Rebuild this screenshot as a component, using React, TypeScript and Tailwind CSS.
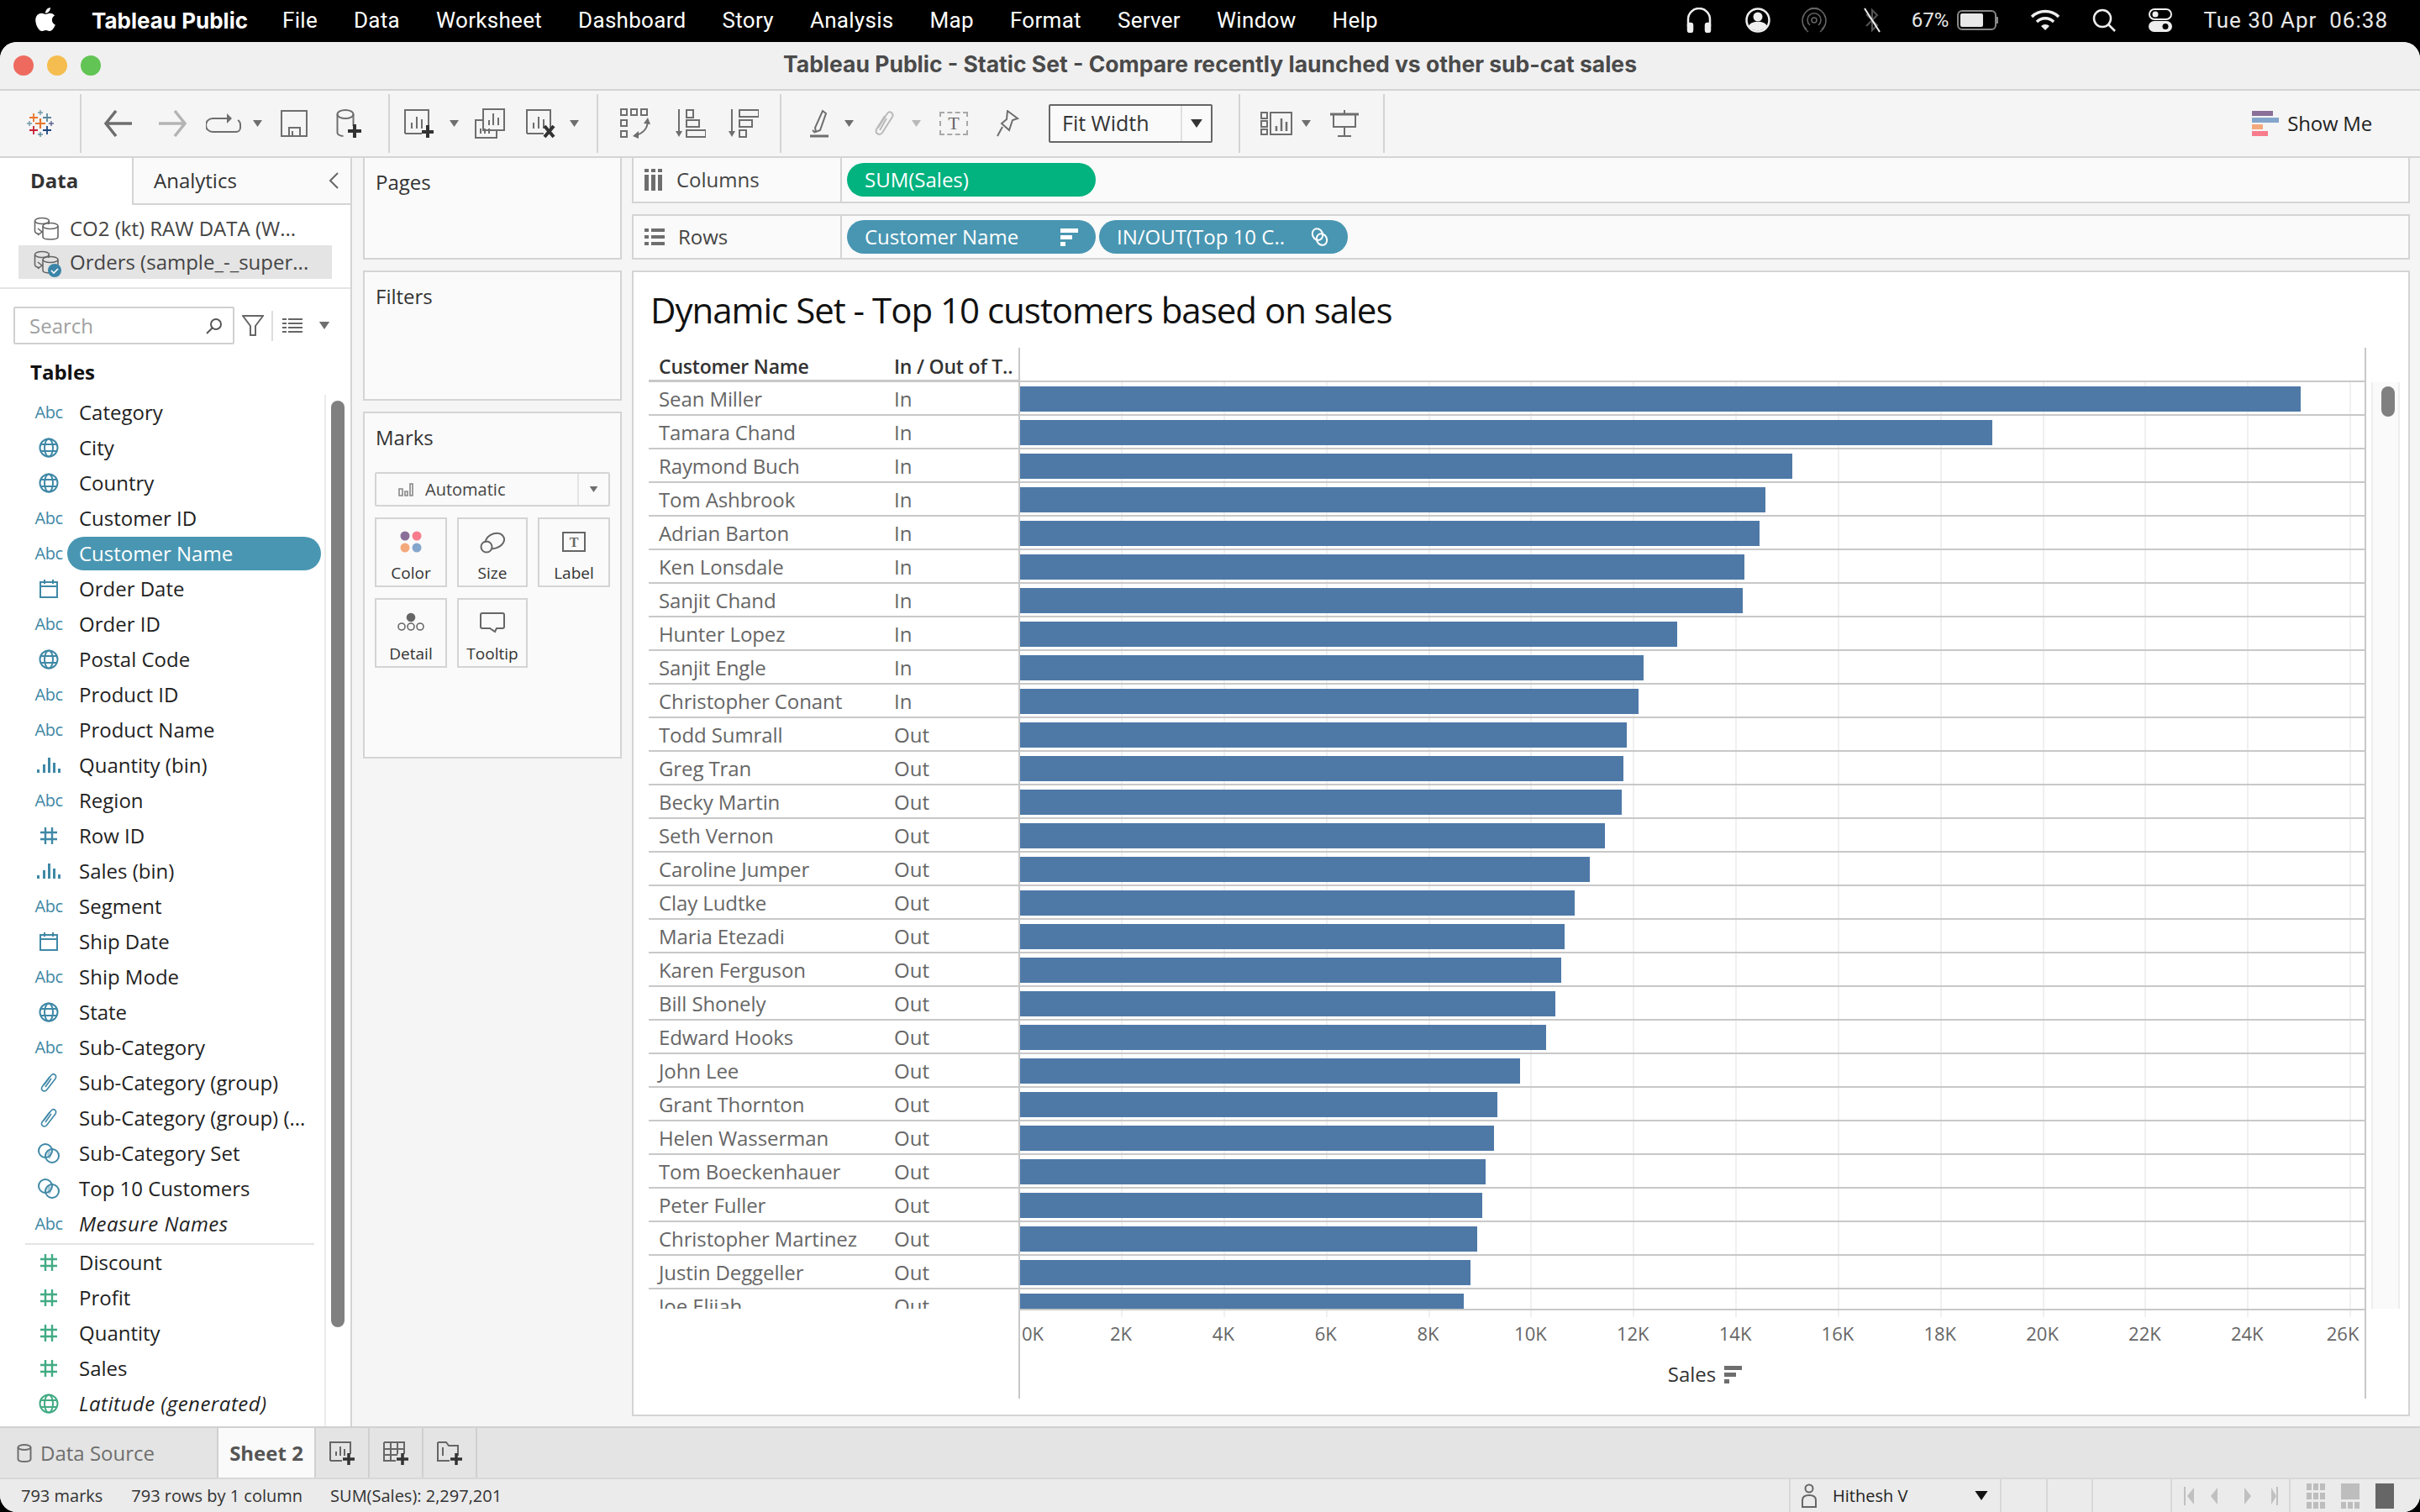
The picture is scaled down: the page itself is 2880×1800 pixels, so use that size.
import { FaApple } from "react-icons/fa";

const menuItems = ["File", "Data", "Worksheet", "Dashboard", "Story", "Analysis", "Map", "Format", "Server", "Window", "Help"];

type FieldKind = "abc" | "globe" | "date" | "bin" | "hash" | "clip" | "set";

const dimensions: { name: string; kind: FieldKind; italic?: boolean }[] = [
  { name: "Category", kind: "abc" },
  { name: "City", kind: "globe" },
  { name: "Country", kind: "globe" },
  { name: "Customer ID", kind: "abc" },
  { name: "Customer Name", kind: "abc" },
  { name: "Order Date", kind: "date" },
  { name: "Order ID", kind: "abc" },
  { name: "Postal Code", kind: "globe" },
  { name: "Product ID", kind: "abc" },
  { name: "Product Name", kind: "abc" },
  { name: "Quantity (bin)", kind: "bin" },
  { name: "Region", kind: "abc" },
  { name: "Row ID", kind: "hash" },
  { name: "Sales (bin)", kind: "bin" },
  { name: "Segment", kind: "abc" },
  { name: "Ship Date", kind: "date" },
  { name: "Ship Mode", kind: "abc" },
  { name: "State", kind: "globe" },
  { name: "Sub-Category", kind: "abc" },
  { name: "Sub-Category (group)", kind: "clip" },
  { name: "Sub-Category (group) (...", kind: "clip" },
  { name: "Sub-Category Set", kind: "set" },
  { name: "Top 10 Customers", kind: "set" },
  { name: "Measure Names", kind: "abc", italic: true },
];

const measures: { name: string; kind: FieldKind; italic?: boolean }[] = [
  { name: "Discount", kind: "hash" },
  { name: "Profit", kind: "hash" },
  { name: "Quantity", kind: "hash" },
  { name: "Sales", kind: "hash" },
  { name: "Latitude (generated)", kind: "globe", italic: true },
];

// name, in/out, pixel x where the bar ends
const customers: [string, string, number][] = [
  ["Sean Miller", "In", 2738],
  ["Tamara Chand", "In", 2371],
  ["Raymond Buch", "In", 2133],
  ["Tom Ashbrook", "In", 2101],
  ["Adrian Barton", "In", 2094],
  ["Ken Lonsdale", "In", 2076],
  ["Sanjit Chand", "In", 2074],
  ["Hunter Lopez", "In", 1996],
  ["Sanjit Engle", "In", 1956],
  ["Christopher Conant", "In", 1950],
  ["Todd Sumrall", "Out", 1936],
  ["Greg Tran", "Out", 1932],
  ["Becky Martin", "Out", 1930],
  ["Seth Vernon", "Out", 1910],
  ["Caroline Jumper", "Out", 1892],
  ["Clay Ludtke", "Out", 1874],
  ["Maria Etezadi", "Out", 1862],
  ["Karen Ferguson", "Out", 1858],
  ["Bill Shonely", "Out", 1851],
  ["Edward Hooks", "Out", 1840],
  ["John Lee", "Out", 1809],
  ["Grant Thornton", "Out", 1782],
  ["Helen Wasserman", "Out", 1778],
  ["Tom Boeckenhauer", "Out", 1768],
  ["Peter Fuller", "Out", 1764],
  ["Christopher Martinez", "Out", 1758],
  ["Justin Deggeller", "Out", 1750],
  ["Joe Elijah", "Out", 1742],
];

const ticks = [2, 4, 6, 8, 10, 12, 14, 16, 18, 20, 22, 24, 26];

function Caret({ className = "", color = "#6e6e6e" }: { className?: string; color?: string }) {
  return (
    <svg width="11" height="8" viewBox="0 0 11 8" className={className}>
      <path d="M0 0h11L5.5 8z" fill={color} />
    </svg>
  );
}

function Sep({ className = "" }: { className?: string }) {
  return <div className={`w-[2px] h-[70px] bg-[#d4d4d4] ${className}`} />;
}

function TableauLogo() {
  const plus = (x: number, y: number, r: number, w: number, c: string) => (
    <path key={`${x}-${y}`} d={`M${x - r} ${y}h${r * 2}M${x} ${y - r}v${r * 2}`} stroke={c} strokeWidth={w} fill="none" />
  );
  return (
    <svg width="32" height="32" viewBox="0 0 32 32" className="ml-[32px]">
      {plus(16, 16, 6, 2.2, "#e8762c")}
      {plus(8, 9, 5, 1.8, "#e8762c")}
      {plus(24, 9, 5, 1.8, "#5b879b")}
      {plus(8, 24, 5, 1.8, "#c72035")}
      {plus(24, 24, 5, 1.8, "#1f457e")}
      {plus(16, 3, 3, 1.4, "#7099a6")}
      {plus(3, 16, 3, 1.4, "#7099a6")}
      {plus(29, 16, 3, 1.4, "#5b6591")}
      {plus(16, 29, 3, 1.4, "#5b879b")}
    </svg>
  );
}

function SheetIcon({ className = "", x, plus }: { className?: string; x?: boolean; plus?: boolean }) {
  return (
    <svg width="36" height="36" viewBox="0 0 36 36" className={className} fill="none">
      <path d="M2 30V2h28v24M2 30h20" stroke="#6e6e6e" strokeWidth="2" />
      <path d="M10 24v-7M16 24V10M22 24v-11" stroke="#6e6e6e" strokeWidth="2" />
      {plus && <path d="M29 20v15M22 28h15" stroke="#333" strokeWidth="4" />}
      {x && <path d="M23 21l11 13M34 21L23 34" stroke="#333" strokeWidth="4" />}
    </svg>
  );
}

function Toolbar() {
  const s = "#6e6e6e";
  return (
    <div className="h-[80px] shrink-0 flex items-center bg-[#f5f5f5] border-b-2 border-[#d4d4d4]">
      <TableauLogo />
      <Sep className="ml-[31px]" />
      <svg width="36" height="32" viewBox="0 0 36 32" className="ml-[26px]" fill="none">
        <path d="M34 16H4M15 1L3 16l12 15" stroke={s} strokeWidth="3.5" />
      </svg>
      <svg width="36" height="32" viewBox="0 0 36 32" className="ml-[28px]" fill="none">
        <path d="M2 16h30M21 1l12 15-12 15" stroke="#b4b4b4" strokeWidth="3.5" />
      </svg>
      <svg width="42" height="26" viewBox="0 0 42 26" className="ml-[22px]" fill="none">
        <path d="M26 7H8a6 6 0 0 0 0 16h28a5 5 0 0 0 5-5v-4a6 6 0 0 0-3-5" stroke={s} strokeWidth="2" />
        <path d="M25 1l6 6-6 6z" fill={s} />
      </svg>
      <Caret className="ml-[14px]" />
      <svg width="32" height="32" viewBox="0 0 32 32" className="ml-[22px]" fill="none">
        <path d="M1 1h30v30H1zM10 31V21h13v10M14 31v-6" stroke={s} strokeWidth="2" />
      </svg>
      <svg width="30" height="34" viewBox="0 0 30 34" className="ml-[34px]" fill="none">
        <ellipse cx="11" cy="6" rx="9.5" ry="5" stroke={s} strokeWidth="2" />
        <path d="M1.5 6v22c0 2 3 4 7 4M20.5 6v14" stroke={s} strokeWidth="2" />
        <path d="M22 18v16M14 26h16" stroke="#333" strokeWidth="4" />
      </svg>
      <Sep className="ml-[32px]" />
      <SheetIcon plus className="ml-[16px]" />
      <Caret className="ml-[19px]" />
      <svg width="36" height="36" viewBox="0 0 36 36" className="ml-[19px]" fill="none">
        <path d="M10 1h25v25H10zM10 14H1v21h25v-9" stroke={s} strokeWidth="2" />
        <path d="M17 20v-6M22 20V6M28 20v-9M7 30v-6M12 30v-6M17 30v-6" stroke={s} strokeWidth="2" />
      </svg>
      <SheetIcon x className="ml-[24px]" />
      <Caret className="ml-[17px]" />
      <Sep className="ml-[21px]" />
      <svg width="36" height="36" viewBox="0 0 36 36" className="ml-[26px]" fill="none">
        <path d="M1 1h7v7H1zM13 1h7v7h-7zM25 1h7v7h-7zM1 14h7v7H1zM1 27h7v7H1z" stroke={s} strokeWidth="2" />
        <path d="M33 14c0 9-5 16-15 18" stroke={s} strokeWidth="2" />
        <path d="M28 18l5-7 3 8zM22 27l-7 6 7 3z" fill={s} />
      </svg>
      <svg width="36" height="36" viewBox="0 0 36 36" className="ml-[30px]" fill="none">
        <path d="M4 1v30" stroke={s} strokeWidth="2" />
        <path d="M0 27l4 7 4-7z" fill={s} />
        <path d="M13 2h8v9h-8zM13 14h15v8H13zM13 26h23v8H13z" stroke={s} strokeWidth="2" />
      </svg>
      <svg width="36" height="36" viewBox="0 0 36 36" className="ml-[27px]" fill="none">
        <path d="M4 1v30" stroke={s} strokeWidth="2" />
        <path d="M0 27l4 7 4-7z" fill={s} />
        <path d="M13 2h23v8H13zM13 14h15v8H13zM13 26h8v8h-8z" stroke={s} strokeWidth="2" />
      </svg>
      <Sep className="ml-[25px]" />
      <svg width="24" height="34" viewBox="0 0 24 34" className="ml-[33px]" fill="none">
        <path d="M16 2l4 3-7 20-5 2-1-5zM4 25l3 3" stroke={s} strokeWidth="2" />
        <path d="M1 32h22" stroke={s} strokeWidth="3" />
      </svg>
      <Caret className="ml-[18px]" />
      <svg width="26" height="32" viewBox="0 0 26 32" className="ml-[23px]" fill="none">
        <path d="M6 21L17 4c3-4 8 0 6 4L11 27c-3 4-9 1-7-4L14 7M16 10L8 24" stroke="#b9b9b9" strokeWidth="2" />
      </svg>
      <Caret className="ml-[20px]" color="#b9b9b9" />
      <div className="ml-[22px] w-[34px] h-[28px] border-2 border-dashed border-[#a8a8a8] flex items-center justify-center font-['Liberation_Serif',serif] text-[22px] leading-none text-[#666]">
        T
      </div>
      <svg width="28" height="32" viewBox="0 0 28 32" className="ml-[33px]" fill="none">
        <path d="M14 1l12 9-6 2-4 12-9-8 6-5zM8 20L2 31" stroke={s} strokeWidth="2" />
      </svg>
      <div className="ml-[35px] w-[195px] h-[46px] flex border-2 border-[#666] rounded-[2px] bg-[#fafafa] items-center">
        <span className="flex-1 pl-[14px] text-[25px] text-[#333]">Fit Width</span>
        <div className="w-[36px] h-full border-l-2 border-[#e0e0e0] flex items-center justify-center">
          <Caret color="#333" className="w-[14px] h-[10px]" />
        </div>
      </div>
      <Sep className="ml-[31px]" />
      <svg width="38" height="28" viewBox="0 0 38 28" className="ml-[24px]" fill="none">
        <path d="M1 1h7v7H1zM1 11h7v7H1zM1 21h7v6H1zM12 1h25v26H12z" stroke={s} strokeWidth="2" />
        <path d="M19 23v-6M25 23V8M31 23V12" stroke={s} strokeWidth="2.5" />
      </svg>
      <Caret className="ml-[11px]" />
      <svg width="34" height="32" viewBox="0 0 34 32" className="ml-[23px]" fill="none">
        <path d="M0 5h34" stroke={s} strokeWidth="3" />
        <path d="M4 5v15h26V5M17 0v5M17 20v10M9 31h16" stroke={s} strokeWidth="2" />
      </svg>
      <Sep className="ml-[29px]" />
      <div className="ml-auto mr-[57px] flex items-center">
        <div className="flex flex-col gap-[2px] w-[32px]">
          <div className="h-[6px] w-[25px] bg-[#8a7098]" />
          <div className="h-[6px] w-[32px] bg-[#85a6cc]" />
          <div className="h-[6px] w-[13px] bg-[#f4a97c]" />
          <div className="h-[6px] w-[19px] bg-[#f87c8c]" />
        </div>
        <span className="ml-[10px] text-[24px] text-[#222] tracking-[-0.2px]">Show Me</span>
      </div>
    </div>
  );
}

function FieldIcon({ kind, color }: { kind: FieldKind; color: string }) {
  if (kind === "abc") return <span className="text-[20px] leading-none tracking-[-0.5px]" style={{ color }}>Abc</span>;
  if (kind === "globe")
    return (
      <svg width="24" height="24" viewBox="0 0 24 24" fill="none" stroke={color} strokeWidth="2">
        <circle cx="12" cy="12" r="10.5" />
        <ellipse cx="12" cy="12" rx="5" ry="10.5" />
        <path d="M2 8h20M2 16h20" />
      </svg>
    );
  if (kind === "date")
    return (
      <svg width="24" height="24" viewBox="0 0 24 24" fill="none" stroke={color} strokeWidth="2">
        <path d="M2 4h20v18H2zM2 9h20M7 1v5M17 1v5" />
      </svg>
    );
  if (kind === "bin")
    return (
      <svg width="28" height="20" viewBox="0 0 28 20" fill={color}>
        <path d="M0 15h3v4H0zM7 9h3v10H7zM13 1h3v18h-3zM19 7h3v12h-3zM25 14h3v5h-3z" />
      </svg>
    );
  if (kind === "hash")
    return (
      <svg width="22" height="22" viewBox="0 0 22 22" fill="none" stroke={color} strokeWidth="2.4">
        <path d="M7 1v20M15 1v20M1 7h20M1 15h20" />
      </svg>
    );
  if (kind === "clip")
    return (
      <svg width="22" height="24" viewBox="0 0 22 24" fill="none" stroke={color} strokeWidth="1.6">
        <path d="M5 15L14 3c3-3 7 0 5 4L9 20c-3 4-8 1-6-3L12 5M14 7L7 17" />
      </svg>
    );
  return (
    <svg width="28" height="24" viewBox="0 0 28 24" fill="none">
      <path d="M15 8a8 8 0 0 1 0 11a8 8 0 0 1-1-11z" fill={color} opacity="0.45" />
      <circle cx="10" cy="9" r="8" stroke={color} strokeWidth="2" />
      <circle cx="18" cy="15" r="8" stroke={color} strokeWidth="2" />
    </svg>
  );
}

function FieldRow({ field, color, active }: { field: { name: string; kind: FieldKind; italic?: boolean }; color: string; active?: boolean }) {
  return (
    <div className="h-[42px] flex items-center pl-[36px] pr-[4px]">
      <div className="w-[44px] flex justify-center">
        <FieldIcon kind={field.kind} color={color} />
      </div>
      <div className={`flex-1 h-[40px] flex items-center pl-[14px] text-[24px] whitespace-nowrap ${active ? "bg-[#4996b2] text-white rounded-full" : "text-[#1f1f1f]"} ${field.italic ? "italic tracking-[0.5px]" : ""}`}>
        {field.name}
      </div>
    </div>
  );
}

function DataPane() {
  return (
    <div className="w-[419px] shrink-0 bg-white border-r-2 border-[#d4d4d4] flex flex-col">
      <div className="h-[56px] flex">
        <div className="w-[157px] pl-[36px] pb-[2px] flex items-center text-[24px] font-bold text-[#333]">Data</div>
        <div className="flex-1 border-l-2 border-b-2 border-[#d4d4d4] bg-[#fafafa] flex items-center pl-[24px] text-[24px] text-[#333]">
          Analytics
          <svg width="12" height="20" viewBox="0 0 12 20" className="ml-auto mr-[14px]" fill="none">
            <path d="M11 1L2 10l9 9" stroke="#666" strokeWidth="2" />
          </svg>
        </div>
      </div>
      <div className="h-[100px] pt-[8px] border-b-2 border-[#e4e4e4]">
        <div className="h-[40px] flex items-center pl-[40px] text-[24px] text-[#444] whitespace-nowrap">
          <DbIcon />
          <span className="ml-[13px]">CO2 (kt) RAW DATA (W...</span>
        </div>
        <div className="h-[40px] ml-[22px] mr-[22px] bg-[#e4e4e4] flex items-center pl-[18px] text-[24px] text-[#444] whitespace-nowrap">
          <div className="relative">
            <DbIcon />
            <svg width="16" height="16" viewBox="0 0 16 16" className="absolute right-[-3px] bottom-[-4px]">
              <circle cx="8" cy="8" r="8" fill="#3a85a8" />
              <path d="M4 8l3 3 5-5" stroke="#fff" strokeWidth="1.6" fill="none" />
            </svg>
          </div>
          <span className="ml-[13px]">Orders (sample_-_super...</span>
        </div>
      </div>
      <div className="flex items-center pl-[16px] pt-[21px]">
        <div className="w-[263px] h-[45px] border-2 border-[#d0d0d0] rounded-[2px] flex items-center pl-[17px] pr-[12px] text-[24px] text-[#a0a0a0]">
          Search
          <svg width="20" height="20" viewBox="0 0 20 20" className="ml-auto" fill="none" stroke="#555" strokeWidth="2">
            <circle cx="12" cy="8" r="6" />
            <path d="M8 12l-7 7" />
          </svg>
        </div>
        <svg width="26" height="26" viewBox="0 0 26 26" className="ml-[9px]" fill="none" stroke="#666" strokeWidth="2">
          <path d="M1 1h24L16 13v11h-6V13z" />
        </svg>
        <div className="ml-[9px] w-[2px] h-[36px] bg-[#ddd]" />
        <svg width="24" height="18" viewBox="0 0 24 18" className="ml-[11px]" fill="#666">
          <path d="M0 0h5v2H0zM7 0h17v2H7zM0 5h5v2H0zM7 5h17v2H7zM0 10h5v2H0zM7 10h17v2H7zM0 15h5v2H0zM7 15h17v2H7z" />
        </svg>
        <Caret className="ml-[19px] w-[14px] h-[9px]" />
      </div>
      <div className="h-[60px] shrink-0 pl-[36px] pt-[6px] flex items-center text-[24px] font-bold text-[#111]">Tables</div>
      <div className="flex-1 flex overflow-hidden">
        <div className="w-[388px] shrink-0 border-r-2 border-[#ececec] relative">
          <div className="h-[1008px]">
            {dimensions.map((f) => (
              <FieldRow key={f.name} field={f} color="#3f88a6" active={f.name === "Customer Name"} />
            ))}
          </div>
          <div className="h-[4px] flex items-end pl-[30px] pr-[12px]">
            <div className="h-[2px] w-full bg-[#e4e4e4]" />
          </div>
          {measures.map((f) => (
            <FieldRow key={f.name} field={f} color="#42ab83" />
          ))}
        </div>
        <div className="flex-1 pl-[6px]">
          <div className="w-[16px] h-[1103px] mt-[7px] bg-[#808080] rounded-full" />
        </div>
      </div>
    </div>
  );
}

function DbIcon() {
  return (
    <svg width="30" height="28" viewBox="0 0 30 28" fill="none" stroke="#666" strokeWidth="1.6">
      <ellipse cx="10" cy="5" rx="8.5" ry="3.5" />
      <path d="M1.5 5v12c0 2 2 3 5 3.5M18 9c0-1 0-2 0-4" />
      <ellipse cx="20" cy="11" rx="9" ry="3.5" />
      <path d="M11 11v13c0 2 4 3 9 3s9-1 9-3V11M5 14l5 4-5 4" />
    </svg>
  );
}

function MarkButton({ label, width, children }: { label: string; width: string; children: React.ReactNode }) {
  return (
    <div className={`${width} h-[83px] border-2 border-[#d4d4d4] flex flex-col items-center pt-[12px]`}>
      <div className="h-[30px] flex items-center">{children}</div>
      <span className="mt-[10px] text-[19px] leading-[24px] text-[#333]">{label}</span>
    </div>
  );
}

function CardsColumn() {
  return (
    <div className="w-[308px] shrink-0 ml-[13px] flex flex-col">
      <div className="h-[121px] border-2 border-t-0 border-[#d4d4d4] bg-[#fafafa] px-[13px] pt-[15px] text-[24px] leading-[28px] text-[#333]">Pages</div>
      <div className="h-[155px] mt-[13px] border-2 border-[#d4d4d4] bg-[#fafafa] px-[13px] pt-[15px] text-[24px] leading-[28px] text-[#333]">Filters</div>
      <div className="h-[413px] mt-[13px] border-2 border-[#d4d4d4] bg-[#fafafa] px-[12px] pt-[15px]">
        <div className="pl-[1px] text-[24px] leading-[28px] text-[#333]">Marks</div>
        <div className="mt-[27px] h-[41px] border-2 border-[#d4d4d4] rounded-[2px] flex items-center pl-[26px] text-[20px] text-[#444]">
          <svg width="18" height="16" viewBox="0 0 18 16" fill="none" stroke="#888" strokeWidth="1.6">
            <path d="M1 7h4v8H1zM8 10h3v5H8zM14 1h3v14h-3z" />
          </svg>
          <span className="ml-[14px] flex-1">Automatic</span>
          <div className="w-[37px] h-full border-l-2 border-[#e4e4e4] flex items-center justify-center">
            <Caret className="w-[13px] h-[7px]" />
          </div>
        </div>
        <div className="mt-[13px] flex gap-[12px]">
          <MarkButton label="Color" width="w-[86px]">
            <svg width="26" height="26" viewBox="0 0 26 26">
              <circle cx="6" cy="6" r="5.5" fill="#8a7098" />
              <circle cx="20" cy="6" r="5.5" fill="#f87c8c" />
              <circle cx="6" cy="20" r="5.5" fill="#f4a97c" />
              <circle cx="20" cy="20" r="5.5" fill="#85a6cc" />
            </svg>
          </MarkButton>
          <MarkButton label="Size" width="w-[84px]">
            <svg width="30" height="28" viewBox="0 0 30 28" fill="none" stroke="#666" strokeWidth="2">
              <path d="M7 15C6 5 26 -2 29 10c1 8-10 13-15 12" />
              <circle cx="8" cy="20" r="6.5" />
            </svg>
          </MarkButton>
          <MarkButton label="Label" width="w-[86px]">
            <svg width="28" height="24" viewBox="0 0 28 24" fill="none">
              <path d="M1 1h26v22H1z" stroke="#666" strokeWidth="2" />
              <text x="14" y="18" textAnchor="middle" fontFamily="Liberation Serif" fontWeight="bold" fontSize="16" fill="#666">T</text>
            </svg>
          </MarkButton>
        </div>
        <div className="mt-[13px] flex gap-[12px]">
          <MarkButton label="Detail" width="w-[86px]">
            <svg width="32" height="24" viewBox="0 0 32 24" fill="none" stroke="#666" strokeWidth="1.6">
              <circle cx="16" cy="6" r="4.5" fill="#666" />
              <circle cx="5" cy="17" r="4" />
              <circle cx="16" cy="17" r="4" />
              <circle cx="27" cy="17" r="4" />
            </svg>
          </MarkButton>
          <MarkButton label="Tooltip" width="w-[84px]">
            <svg width="30" height="26" viewBox="0 0 30 26" fill="none" stroke="#666" strokeWidth="2">
              <path d="M3 2h24a2 2 0 0 1 2 2v14a2 2 0 0 1-2 2h-7l-2 4-6-4H3a2 2 0 0 1-2-2V4a2 2 0 0 1 2-2z" />
            </svg>
          </MarkButton>
        </div>
      </div>
    </div>
  );
}

function SortIcon({ color = "#fff" }: { color?: string }) {
  return (
    <svg width="21" height="21" viewBox="0 0 21 21" fill={color}>
      <path d="M0 0h21v5H0zM0 8h14v5H0zM0 16h6v5H0z" />
    </svg>
  );
}

function Pill({ label, color, children }: { label: string; color: string; children?: React.ReactNode }) {
  return (
    <div className={`w-[296px] h-[40px] rounded-[20px] ${color} flex items-center pl-[21px] pr-[21px] text-[24px] text-white whitespace-nowrap`}>
      <span className="flex-1">{label}</span>
      {children}
    </div>
  );
}

function Shelf({ label, className, icon, children }: { label: string; className: string; icon: React.ReactNode; children: React.ReactNode }) {
  return (
    <div className={`h-[54px] flex bg-[#fafafa] border-2 border-[#d4d4d4] ${className}`}>
      <div className="w-[248px] border-r-2 border-[#d4d4d4] flex items-center pl-[13px] text-[24px] text-[#444]">
        {icon}
        <span className="ml-[16px]">{label}</span>
      </div>
      <div className="flex-1 flex items-center pl-[6px] gap-[4px]">{children}</div>
    </div>
  );
}

const axisX = (k: number) => 1212.2 + 60.92 * k - 1214;

function Chart() {
  return (
    <div className="flex-1 flex mt-[13px] mb-[12px] bg-white border-2 border-[#d4d4d4] min-h-0 flex-col">
      <div className="h-[90px] shrink-0 pl-[20px] pt-[20px] text-[42px] leading-[50px] tracking-[-1px] text-[#111] whitespace-nowrap">
        Dynamic Set - Top 10 customers based on sales
      </div>
      <div className="flex pl-[18px]">
        <div className="w-[2044px]">
          <div className="h-[41px] flex">
            <div className="w-[440px] flex items-center pt-[6px] border-b-[3px] border-[#c8c8c8] text-[23px] font-semibold text-[#333] whitespace-nowrap tracking-[-0.2px]">
              <span className="w-[292px] pl-[12px]">Customer Name</span>
              <span>In / Out of T..</span>
            </div>
            <div className="flex-1 border-x-2 border-b-2 border-[#c8c8c8]" />
          </div>
          <div className="relative h-[1103px] overflow-hidden">
            {customers.map(([name, inOut, end]) => (
              <div key={name} className="h-[40px] flex border-b-2 border-[#c8c8c8] text-[24px] text-[#666]">
                <span className="w-[292px] pl-[12px] leading-[40px] whitespace-nowrap tracking-[-0.1px]">{name}</span>
                <span className="w-[148px] leading-[40px]">{inOut}</span>
                <div className="flex-1 border-x-2 border-[#c8c8c8] pt-[5px] relative">
                  {ticks.map((k) => (
                    <div key={k} className="absolute top-0 bottom-0 w-[2px] bg-[#f0f0f0]" style={{ left: axisX(k) }} />
                  ))}
                  <div className="relative h-[30px] bg-[#4e79a7]" style={{ width: end - 1214 }} />
                </div>
              </div>
            ))}
          </div>
          <div className="h-[107px] ml-[440px] border-x-2 border-t-2 border-[#c8c8c8] flex flex-col">
            <div className="h-[56px] relative shrink-0 text-[22px] text-[#666]">
              {ticks.map((k) => (
                <div key={k} className="absolute top-0 h-[8px] w-[2px] bg-[#f0f0f0]" style={{ left: axisX(k) }} />
              ))}
              <span className="absolute left-[2px] top-[13px] leading-[28px]">0K</span>
              {ticks.map((k) => (
                <span key={k} className="absolute top-[13px] leading-[28px] -translate-x-1/2" style={{ left: k === 26 ? axisX(k) - 8 : axisX(k) }}>
                  {k}K
                </span>
              ))}
            </div>
            <div className="flex items-center justify-center pl-[30px] pt-[2px] text-[24px] font-medium text-[#333]">
              Sales
              <span className="ml-[10px] flex">
                <SortIcon color="#6e6e6e" />
              </span>
            </div>
          </div>
        </div>
        <div className="w-[34px] h-[1103px] ml-[6px] mt-[41px] bg-[#fafafa] border-x-2 border-[#eeeeee] pt-[5px] pl-[10px]">
          <div className="w-[16px] h-[36px] rounded-full bg-[#808080]" />
        </div>
      </div>
    </div>
  );
}

function MainColumn() {
  return (
    <div className="flex-1 ml-[12px] mr-[12px] flex flex-col min-w-0">
      <Shelf
        label="Columns"
        className="border-t-0"
        icon={
          <svg width="22" height="26" viewBox="0 0 22 26" fill="#6e6e6e">
            <path d="M0 7h5v19H0zM8 7h5v19H8zM16 7h5v19h-5zM0 0h5v4H0zM8 0h5v4H8zM16 0h5v4h-5z" />
          </svg>
        }
      >
        <Pill label="SUM(Sales)" color="bg-[#02b27f]" />
      </Shelf>
      <Shelf
        label="Rows"
        className="mt-[13px]"
        icon={
          <svg width="24" height="20" viewBox="0 0 24 20" fill="#6e6e6e">
            <path d="M0 0h5v4H0zM8 0h16v4H8zM0 8h5v4H0zM8 8h16v4H8zM0 16h5v4H0zM8 16h16v4H8z" />
          </svg>
        }
      >
        <Pill label="Customer Name" color="bg-[#4996b2]">
          <SortIcon />
        </Pill>
        <Pill label="IN/OUT(Top 10 C.." color="bg-[#4996b2]">
          <svg width="24" height="24" viewBox="0 0 24 24" fill="none" stroke="#fff" strokeWidth="2">
            <ellipse cx="9" cy="9" rx="6" ry="7" transform="rotate(-25 9 9)" />
            <ellipse cx="14" cy="15" rx="6" ry="7" transform="rotate(-25 14 15)" />
          </svg>
        </Pill>
      </Shelf>
      <Chart />
    </div>
  );
}

function TabBar() {
  const addIcons = [
    <path key="a" d="M2 24V2h24v14M2 24h14M9 18v-5M14 18V7M19 18v-8" />,
    <path key="b" d="M2 2h24v14M2 2v22h14M2 10h24M2 17h16M10 2v22M18 2v14" />,
    <path key="c" d="M2 2h10l3 4h11v12M2 2v22h14M8 8v10" />,
  ];
  return (
    <div className="h-[61px] shrink-0 bg-[#e4e4e4] border-t-2 border-[#d0d0d0] flex">
      <div className="w-[260px] flex items-center pl-[20px] text-[24px] text-[#6e6e6e] border-r-2 border-[#d0d0d0]">
        <svg width="18" height="22" viewBox="0 0 18 22" fill="none" stroke="#6e6e6e" strokeWidth="2">
          <ellipse cx="9" cy="4" rx="7.5" ry="3" />
          <path d="M1.5 4v14c0 2 3 3 7.500 3s7.500-1 7.500-3V4" />
        </svg>
        <span className="ml-[10px]">Data Source</span>
      </div>
      <div className="w-[116px] bg-[#fafafa] border-r-2 border-[#d0d0d0] flex items-center justify-center text-[24px] font-bold text-[#555]">Sheet 2</div>
      {addIcons.map((icon, i) => (
        <div key={i} className="w-[64px] flex items-center justify-center border-r-2 border-[#d0d0d0]">
          <svg width="32" height="30" viewBox="0 0 32 30" fill="none" stroke="#666" strokeWidth="2">
            {icon}
            <path d="M24 15v14M17 22h14" stroke="#333" strokeWidth="3.5" />
          </svg>
        </div>
      ))}
    </div>
  );
}

function StatusBar() {
  return (
    <div className="h-[41px] shrink-0 bg-[#ebebeb] border-t-2 border-[#d8d8d8] flex items-center text-[20px] text-[#333]">
      <span className="ml-[25px]">793 marks</span>
      <span className="ml-[34px]">793 rows by 1 column</span>
      <span className="ml-[33px]">SUM(Sales): 2,297,201</span>
      <div className="ml-auto h-full flex items-center">
        <div className="w-[253px] h-full border-l-2 border-r-2 border-[#d8d8d8] flex items-center pl-[12px]">
          <svg width="20" height="30" viewBox="0 0 20 30" fill="none" stroke="#666" strokeWidth="2">
            <circle cx="10" cy="6" r="4.5" />
            <path d="M2 28V20c0-4 3-6 8-6s8 2 8 6v8z" />
          </svg>
          <span className="ml-[18px] flex-1 text-[#222]">Hithesh V</span>
          <Caret color="#111" className="mr-[14px] w-[16px] h-[11px]" />
        </div>
        <div className="w-[55px] h-full border-r-2 border-[#d8d8d8]" />
        <div className="w-[54px] h-full border-r-2 border-[#d8d8d8]" />
        <div className="w-[94px] h-full border-r-2 border-[#d8d8d8]" />
        <div className="w-[141px] h-full border-r-2 border-[#d8d8d8] flex items-center justify-center">
          <svg width="112" height="26" viewBox="0 0 112 26" fill="#c0c0c0">
            <path d="M0 2h2v22H0zM12 3v20L4 13zM40 3v20l-8-10zM72 3v20l8-10zM104 3v20l6-10zM110 2h2v22h-2z" />
          </svg>
        </div>
        <div className="w-[154px] h-full flex items-center pl-[19px] gap-[19px]">
          <svg width="22" height="30" viewBox="0 0 22 30" fill="#bdbdbd">
            <path d="M0 0h6v8H0zM8 0h6v8H8zM16 0h6v8h-6zM0 11h6v8H0zM8 11h6v8H8zM16 11h6v8h-6zM0 22h6v8H0zM8 22h6v8H8zM16 22h6v8h-6z" />
          </svg>
          <svg width="22" height="30" viewBox="0 0 22 30" fill="#bdbdbd">
            <path d="M0 0h22v19H0zM0 22h6v8H0zM8 22h6v8H8zM16 22h6v8h-6z" />
          </svg>
          <div className="w-[22px] h-[30px] bg-[#666]" />
        </div>
      </div>
    </div>
  );
}

function MenuBar() {
  return (
    <div className="h-[50px] shrink-0 flex items-center bg-black text-white font-['Roboto',sans-serif] text-[26px] pb-[2px]">
      <FaApple className="ml-[38px] w-[32px] h-[32px] mb-[3px]" />
      <span className="ml-[39px] font-['Inter',sans-serif] text-[26px] font-bold">Tableau Public</span>
      <div className="ml-[41px] flex gap-[43px] tracking-[0.3px]">
        {menuItems.map((m) => (
          <span key={m}>{m}</span>
        ))}
      </div>
      <div className="ml-auto flex items-center text-[#e8e8e8]">
        <svg width="30" height="30" viewBox="0 0 30 30" fill="none" stroke="#eee" strokeWidth="2.5">
          <path d="M2 22V14a13 13 0 0 1 26 0v8" />
          <rect x="2" y="19" width="5" height="10" rx="2" fill="#eee" />
          <rect x="23" y="19" width="5" height="10" rx="2" fill="#eee" />
        </svg>
        <svg width="30" height="30" viewBox="0 0 30 30" className="ml-[40px]">
          <circle cx="15" cy="15" r="13.5" fill="none" stroke="#eee" strokeWidth="2.5" />
          <circle cx="15" cy="11" r="5.5" fill="#eee" />
          <path d="M4 22c3-5 7-5 11-5s8 0 11 5a14 14 0 0 1-22 0z" fill="#eee" />
        </svg>
        <svg width="32" height="30" viewBox="0 0 32 30" className="ml-[36px]" fill="none" stroke="#666" strokeWidth="1.5">
          <circle cx="16" cy="15" r="3" />
          <path d="M11 21a8 8 0 1 1 10 0M7 26a14 14 0 1 1 18 0M9 29A16 16 0 0 1 16 0a16 16 0 0 1 7 29" />
        </svg>
        <svg width="26" height="32" viewBox="0 0 26 32" className="ml-[40px]" fill="none">
          <path d="M6 9l13 13-6 6V4l6 6L6 23" stroke="#555" strokeWidth="2" />
          <path d="M4 2l18 28" stroke="#eee" strokeWidth="2" />
        </svg>
        <span className="ml-[34px] text-[24px]">67%</span>
        <div className="ml-[10px] w-[47px] h-[24px] border-2 border-[#888] rounded-[6px] p-[2px]">
          <div className="w-[27px] h-full bg-[#e8e8e8] rounded-[2px]" />
        </div>
        <div className="w-[2px] h-[8px] bg-[#888]" />
        <svg width="36" height="26" viewBox="0 0 36 26" className="ml-[38px]" fill="none" stroke="#eee" strokeWidth="3.500">
          <path d="M2 9a23 23 0 0 1 32 0M8 15a14 14 0 0 1 20 0" />
          <path d="M13 20a7 7 0 0 1 10 0l-5 5z" fill="#eee" stroke="none" />
        </svg>
        <svg width="28" height="28" viewBox="0 0 28 28" className="ml-[38px]" fill="none" stroke="#eee" strokeWidth="2.5">
          <circle cx="12" cy="12" r="10" />
          <path d="M19 19l8 8" />
        </svg>
        <svg width="28" height="28" viewBox="0 0 28 28" className="ml-[39px]">
          <rect x="1" y="1" width="26" height="12" rx="6" fill="none" stroke="#eee" strokeWidth="2" />
          <circle cx="8" cy="7" r="3.500" fill="#eee" />
          <rect x="0" y="15" width="28" height="13" rx="6.500" fill="#eee" />
          <circle cx="20" cy="21.500" r="3.500" fill="#000" />
        </svg>
        <span className="ml-[37px] mr-[38px] whitespace-pre tracking-[1px]">Tue 30 Apr  06:38</span>
      </div>
    </div>
  );
}

export default function App() {
  return (
    <div className="w-[2880px] h-[1800px] bg-black flex flex-col overflow-hidden font-['Open_Sans',sans-serif]">
      <MenuBar />
      <div className="flex-1 min-h-0 flex flex-col rounded-[20px] overflow-hidden bg-[#f5f5f5]">
        <div className="relative h-[58px] shrink-0 bg-[#f0f0f0] border-b-2 border-[#d4d4d4] flex items-center justify-center font-['Inter',sans-serif] text-[26.5px] font-bold text-[#4a4a4a] pb-[2px]">
          <div className="absolute left-[16px] top-[16px] flex gap-[16px]">
            <div className="w-[24px] h-[24px] rounded-full bg-[#ee6a5f]" />
            <div className="w-[24px] h-[24px] rounded-full bg-[#f5bd4f]" />
            <div className="w-[24px] h-[24px] rounded-full bg-[#61c454]" />
          </div>
          Tableau Public - Static Set - Compare recently launched vs other sub-cat sales
        </div>
        <Toolbar />
        <div className="flex-1 min-h-0 flex">
          <DataPane />
          <CardsColumn />
          <MainColumn />
        </div>
        <TabBar />
        <StatusBar />
      </div>
    </div>
  );
}
